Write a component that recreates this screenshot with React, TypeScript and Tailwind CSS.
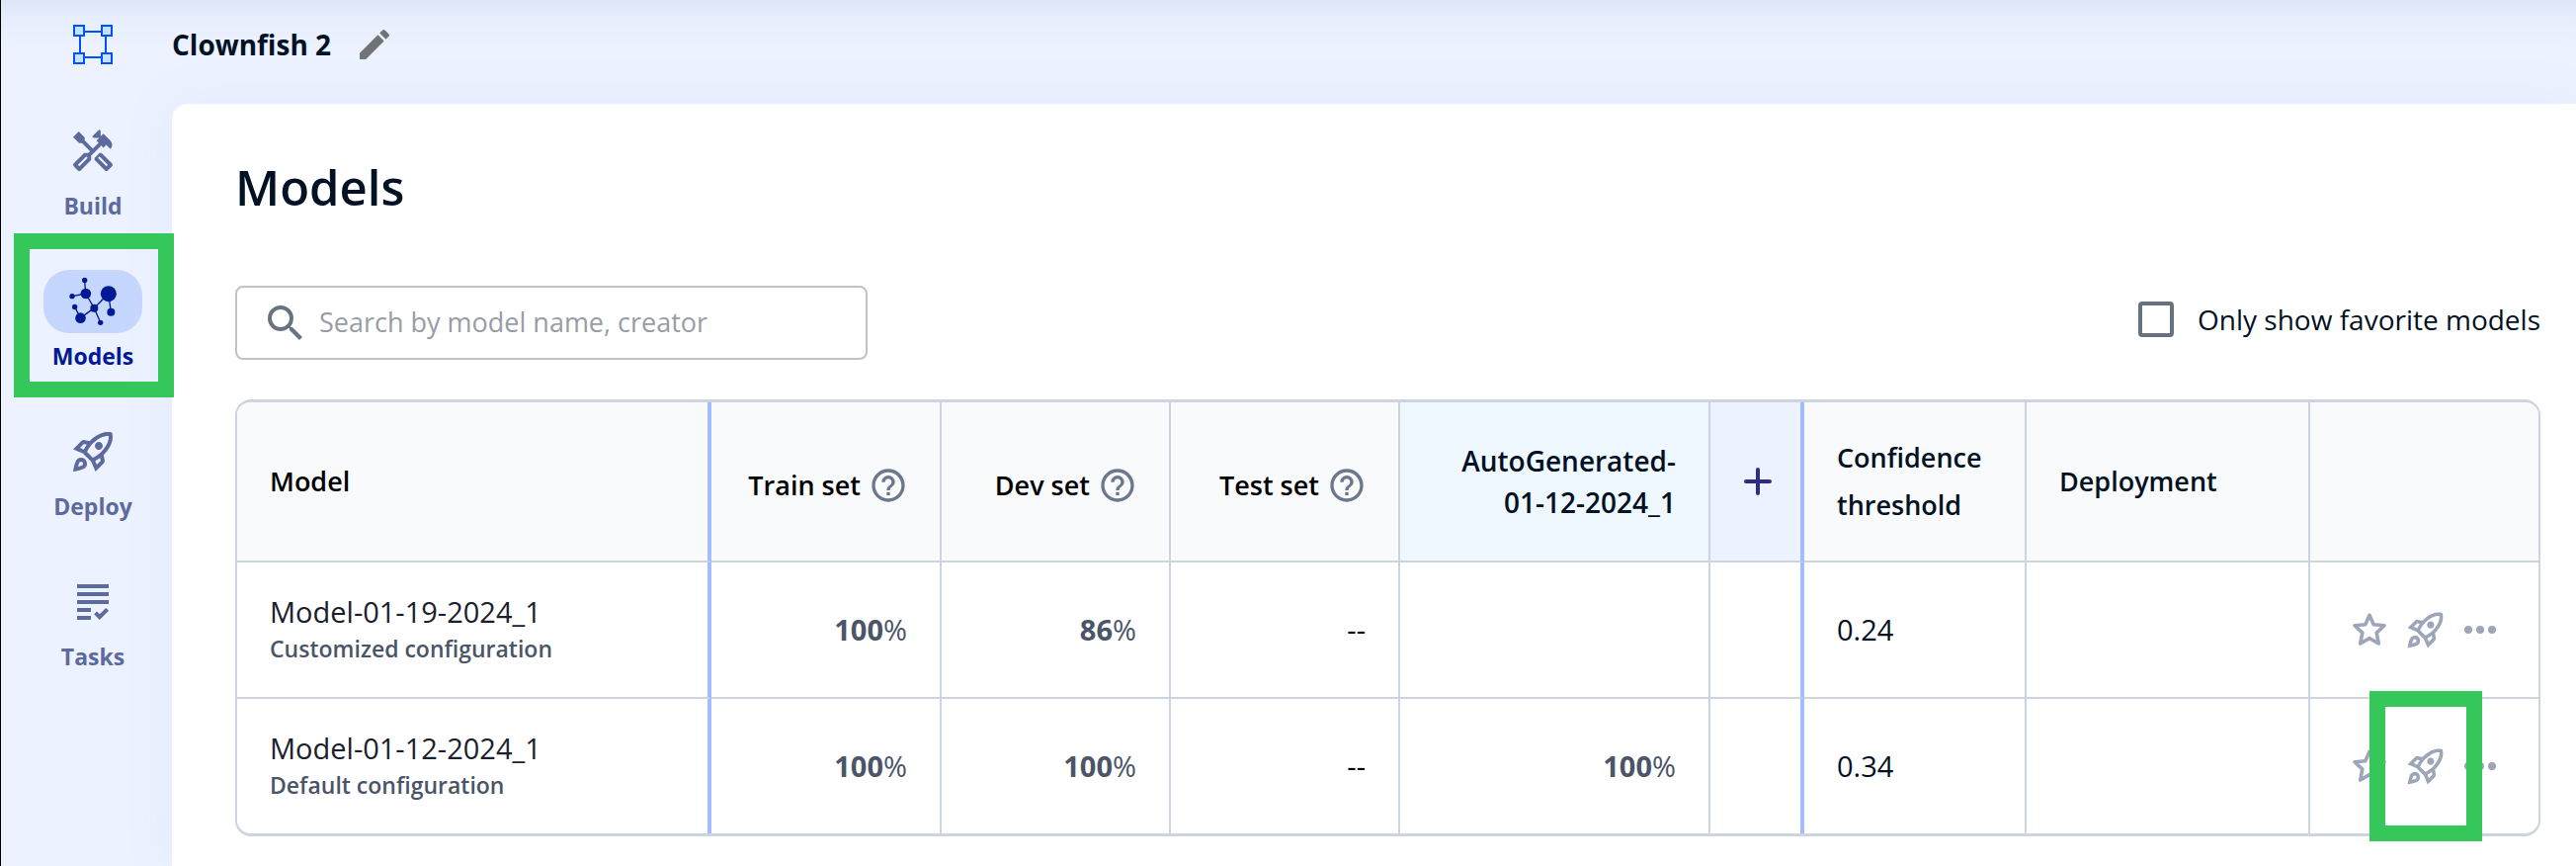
import React from "react";
import {
  MdEdit,
  MdGrading,
  MdHelpOutline,
  MdOutlineHandyman,
  MdOutlineRocketLaunch,
  MdSearch,
} from "react-icons/md";

function Logo() {
  return (
    <svg viewBox="0 0 40 40" className="size-10" fill="#c5e2ff" stroke="#0052ff" strokeWidth="2">
      <rect x="7" y="7" width="26" height="26" fill="none" />
      <rect x="1" y="1" width="10" height="10" />
      <rect x="29" y="1" width="10" height="10" />
      <rect x="1" y="29" width="10" height="10" />
      <rect x="29" y="29" width="10" height="10" />
    </svg>
  );
}

function ModelsIcon() {
  return (
    <svg viewBox="207 180 150 150" className="size-[50px]" fill="currentColor">
      <path
        d="M257 190L260 231M219 239L260 231M260 231L286 275M227 271L244 305M244 305L286 275M286 275L305 319M286 275L329 231M329 231L337 287"
        fill="none"
        stroke="currentColor"
        strokeWidth="4"
      />
      <circle cx="257" cy="190.500" r="8" />
      <circle cx="219" cy="239" r="8" />
      <circle cx="260.500" cy="231" r="16" />
      <circle cx="227" cy="271.500" r="8" />
      <circle cx="244.500" cy="305" r="16" />
      <circle cx="286" cy="275" r="12" />
      <circle cx="305" cy="319" r="8" />
      <circle cx="329.500" cy="231.500" r="24" />
      <circle cx="337" cy="287" r="12" />
    </svg>
  );
}

function StarIcon() {
  return (
    <svg viewBox="0 0 34 34" className="size-[34px]" fill="none" stroke="currentColor" strokeWidth="3.600" strokeLinejoin="round">
      <path d="M17 2.300L21.200 11.700L32 12.700L24.200 20.100L26.300 31L17 25.600L7.700 31L9.800 20.100L2 12.700L12.800 11.700Z" />
    </svg>
  );
}

function DotsIcon() {
  return (
    <svg viewBox="0 0 32 8" className="h-2 w-8" fill="currentColor">
      <circle cx="4" cy="4" r="4" />
      <circle cx="16" cy="4" r="4" />
      <circle cx="28" cy="4" r="4" />
    </svg>
  );
}

function PlusIcon() {
  return (
    <svg viewBox="0 0 28 28" className="size-7" stroke="#2d2d86" strokeWidth="4" strokeLinecap="round">
      <path d="M14 2V26M2 14H26" />
    </svg>
  );
}

const navItems = [
  { label: "Build", icon: <MdOutlineHandyman className="size-12" /> },
  { label: "Models", icon: <ModelsIcon />, active: true },
  { label: "Deploy", icon: <MdOutlineRocketLaunch className="size-12" /> },
  { label: "Tasks", icon: <MdGrading className="size-12" /> },
];

function Sidebar() {
  return (
    <aside className="w-[173px] shrink-0 pl-[13px]">
      <a href="#home" aria-label="Home" className="flex h-[90px] items-center justify-center">
        <Logo />
      </a>
      <nav className="mt-[31px] flex flex-col gap-[46px]">
        {navItems.map((item) => (
          <a
            key={item.label}
            href={"#" + item.label.toLowerCase()}
            className={
              "relative flex flex-col items-center gap-1 " +
              (item.active ? "text-[#001a96]" : "text-[#5d6a9d]")
            }
          >
            <span
              className={
                "flex h-16 w-[100px] items-center justify-center rounded-[26px] " +
                (item.active ? "bg-[#c5d7ff]" : "")
              }
            >
              {item.icon}
            </span>
            <span className="text-[23px] leading-[38px] font-bold">{item.label}</span>
            {item.active && (
              <span className="pointer-events-none absolute -top-[37px] -right-0.5 left-0 z-10 h-[166px] border-[16px] border-[#35c759]" />
            )}
          </a>
        ))}
      </nav>
    </aside>
  );
}

const line = "border-[#ccd5df]";
const thin = "border-r-2 border-r-[#ccd5df]";
const thick = "border-r-4 border-r-[#a3bcff]";

function SetHeader({ name }: { name: string }) {
  return (
    <th scope="col" className={"border-b-2 bg-[#f9fafc] px-8 text-black " + line + " " + thin}>
      <div className="flex items-center justify-end gap-2 pt-2">
        <span>{name}</span>
        <MdHelpOutline className="size-10 text-[#6b778c]" />
      </div>
    </th>
  );
}

function Score({ value }: { value: string }) {
  if (value === "") return null;
  if (value === "--") return <span className="text-black">--</span>;
  return (
    <span className="text-[#4a5568]">
      <b className="font-bold">{value}</b>%
    </span>
  );
}

const rows = [
  { name: "Model-01-19-2024_1", config: "Customized configuration", scores: ["100", "86", "--", ""], threshold: "0.24" },
  { name: "Model-01-12-2024_1", config: "Default configuration", scores: ["100", "100", "--", "100"], threshold: "0.34", highlight: true },
];

function ModelsTable() {
  return (
    <table className={"mt-10 w-full table-fixed border-separate border-spacing-0 rounded-[16px] border-x-2 border-y-[3px] text-[29px] " + line}>
      <colgroup>
        <col className="w-[480px]" />
        <col className="w-[233px]" />
        <col className="w-[232px]" />
        <col className="w-[232px]" />
        <col className="w-[314px]" />
        <col className="w-[95px]" />
        <col className="w-[225px]" />
        <col />
        <col className="w-[231px]" />
      </colgroup>
      <thead className="text-[27px] [&_th]:font-semibold">
        <tr className="h-[162px]">
          <th scope="col" className={"rounded-tl-[13px] border-b-2 bg-[#f9fafc] px-[33px] text-left text-black " + line + " " + thick}>
            Model
          </th>
          <SetHeader name="Train set" />
          <SetHeader name="Dev set" />
          <SetHeader name="Test set" />
          <th scope="col" className={"border-b-2 bg-[#eff7ff] px-[33px] text-right text-[28px] leading-[42px] " + line + " " + thin}>
            AutoGenerated-
            <br />
            01-12-2024_1
          </th>
          <th scope="col" className={"border-b-2 bg-[#ecf2ff] pl-1 " + line + " " + thick}>
            <button aria-label="Add evaluation set" className="flex w-full items-center justify-center">
              <PlusIcon />
            </button>
          </th>
          <th scope="col" className={"border-b-2 bg-[#f9fafc] px-[33px] text-left leading-[48px] " + line + " " + thin}>
            Confidence threshold
          </th>
          <th scope="col" className={"border-b-2 bg-[#f9fafc] px-[33px] text-left " + line + " " + thin}>
            Deployment
          </th>
          <th scope="col" aria-label="Actions" className={"rounded-tr-[13px] border-b-2 bg-[#f9fafc] " + line} />
        </tr>
      </thead>
      <tbody className="[&>tr:last-child>td]:border-b-0">
        {rows.map((row) => (
          <tr key={row.name} className="h-[138px] last:h-[136px]">
            <td className={"border-b-2 px-[33px] " + line + " " + thick}>
              <div className="leading-[38px] text-[#1a202c]">{row.name}</div>
              <div className="text-[23px] leading-[36px] font-semibold text-[#4a5568]">{row.config}</div>
            </td>
            {row.scores.map((score, i) => (
              <td key={i} className={"border-b-2 px-[33px] text-right " + line + " " + thin}>
                <Score value={score} />
              </td>
            ))}
            <td className={"border-b-2 " + line + " " + thick} />
            <td className={"border-b-2 px-[33px] " + line + " " + thin}>{row.threshold}</td>
            <td className={"border-b-2 " + line + " " + thin} />
            <td className={"border-b-2 " + line}>
              <div className="flex items-center justify-center gap-[18px] text-[#9ca6b8]">
                <button aria-label="Favorite">
                  <StarIcon />
                </button>
                <button aria-label="Deploy model" className="relative">
                  <MdOutlineRocketLaunch className="size-[43px]" />
                  {row.highlight && (
                    <span className="pointer-events-none absolute top-1/2 left-1/2 z-10 h-[152px] w-[114px] -translate-1/2 border-[16px] border-[#35c759]" />
                  )}
                </button>
                <button aria-label="More options">
                  <DotsIcon />
                </button>
              </div>
            </td>
          </tr>
        ))}
      </tbody>
    </table>
  );
}

export default function App() {
  return (
    <div className="flex min-h-screen border-l border-black bg-[#ecf2ff] font-['Open_Sans',sans-serif] text-[#031124] shadow-[inset_0_48px_44px_-44px_#d3dff2]">
      <Sidebar />
      <div className="flex min-w-0 flex-1 flex-col">
        <header className="flex h-[105px] items-center gap-6 pb-[15px]">
          <span className="text-[28px] font-bold">Clownfish 2</span>
          <button aria-label="Rename project">
            <MdEdit className="size-10 text-[#6f7377]" />
          </button>
        </header>
        <main className="flex-1 rounded-tl-[16px] bg-white pt-[54px] pr-9 pl-16 shadow-[0_0_50px_#e1eaff]">
          <h1 className="text-[49px] leading-[60px] font-semibold">Models</h1>
          <div className="mt-[70px] flex items-center justify-between">
            <label className="flex h-[75px] w-[640px] items-center gap-2.5 rounded-lg border-2 border-[#c1c2c4] pl-[25px]">
              <MdSearch className="size-12 shrink-0 text-[#68737f]" />
              <input
                type="text"
                aria-label="Search models"
                placeholder="Search by model name, creator"
                className="min-w-0 flex-1 bg-transparent text-[27px] outline-none placeholder:text-[#979da5]"
              />
            </label>
            <label className="flex items-center gap-6 pb-2 text-[28px]">
              <input type="checkbox" className="size-9 appearance-none rounded-[4px] border-4 border-[#68727e] bg-white" />
              Only show favorite models
            </label>
          </div>
          <ModelsTable />
        </main>
      </div>
    </div>
  );
}
